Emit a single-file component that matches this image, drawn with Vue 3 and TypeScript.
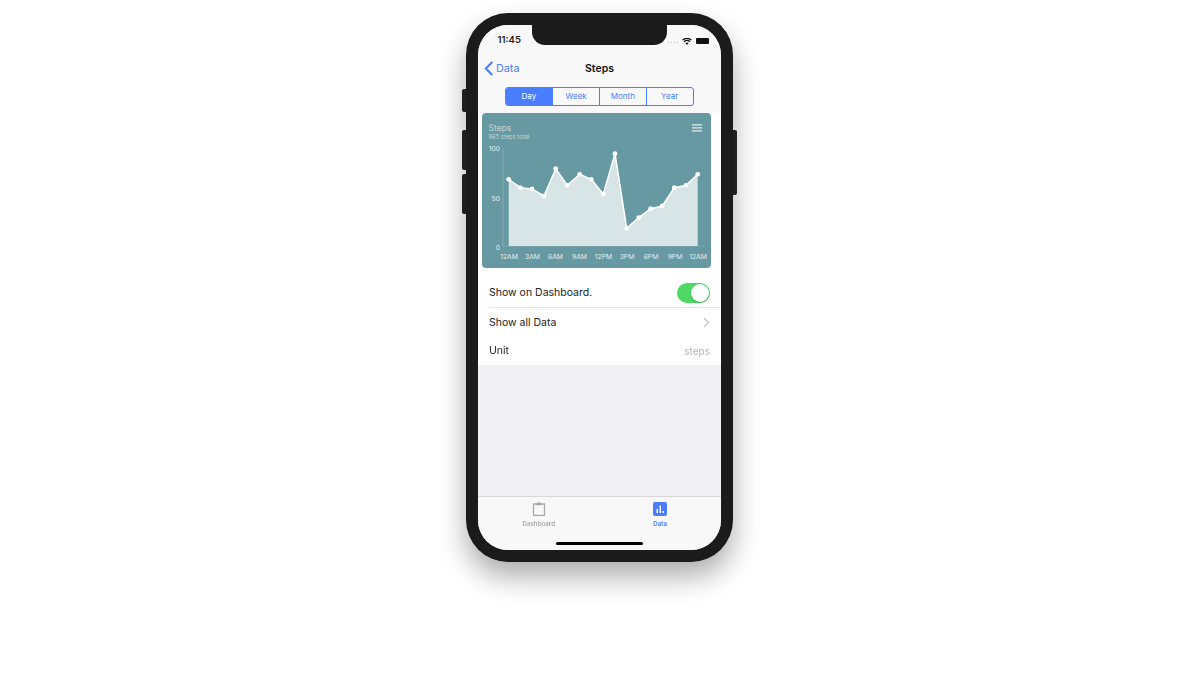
<script setup lang="ts">
const raw: [number, number][] = [[92,208],[127,233],[162,237],[198,258],[233,176],[268,226],[305,193],[340,208],[376,252],[411,131],[446,355],[482,323],[518,296],[553,288],[589,233],[624,226],[659,193]]
const pts = raw.map(([x, y]) => ({ x: +(x / 3 - 4).toFixed(1), y: +(y / 3 - 3).toFixed(1) }))
const base = 133
const line = pts.map(p => `${p.x},${p.y}`).join(' ')
const area = `${pts[0].x},${base} ${line} ${pts[pts.length - 1].x},${base}`
const xLabels = [['12AM',27],['3AM',50.5],['6AM',73.5],['9AM',97.5],['12PM',121.5],['3PM',145],['6PM',169],['9PM',193],['12AM',216]] as const
const yLabels = [['100',35],['50',85],['0',133.5]] as const
const segments = ['Day', 'Week', 'Month', 'Year']
</script>

<template>
  <div class="page">
    <div class="phone">
      <i class="btn b1"></i><i class="btn b2"></i><i class="btn b3"></i><i class="btn b4"></i>
      <div class="screen">
        <div class="notch"></div>
        <div class="status">
          <span class="time">11:45</span>
          <span class="status-icons">
            <span class="dots"><i></i><i></i><i></i><i></i></span>
            <svg width="10" height="7" viewBox="0 0 11 8"><path d="M5.5 8 L3.6 5.8 A3 3 0 0 1 7.4 5.8Z M2.7 4.8 L1.6 3.6 A6 6 0 0 1 9.4 3.6 L8.3 4.8 A4.2 4.2 0 0 0 2.7 4.8Z M.9 2.8 L0 1.8 A8 8 0 0 1 11 1.8 L10.100 2.800 A6.800 6.800 0 0 0 .9 2.800Z" fill="#111"/></svg>
            <span class="battery"></span>
          </span>
        </div>
        <div class="nav">
          <span class="back">
            <svg width="10" height="15" viewBox="0 0 10 15"><path d="M8.300 1 L1.800 7.500 L8.300 14" fill="none" stroke="#4a7dff" stroke-width="2"/></svg>
            Data
          </span>
          <span class="title">Steps</span>
        </div>
        <div class="segment-wrap">
          <div class="segment">
            <span v-for="(s, i) in segments" :key="s" :class="['seg', { on: i === 0 }]">{{ s }}</span>
          </div>
        </div>
        <div class="chart-wrap">
          <div class="card">
            <svg class="chart" width="229" height="155" viewBox="0 0 229 155">
              <text x="6.500" y="18" class="c-title">Steps</text>
              <text x="6.500" y="25.500" class="c-sub">865 steps total</text>
              <g fill="#c3d6d9"><rect x="210" y="11" width="10" height="1.700"/><rect x="210" y="14" width="10" height="1.700"/><rect x="210" y="17" width="10" height="1.700"/></g>
              <path d="M21 35 V133 H222" fill="none" stroke="#86abb1" stroke-width="1"/>
              <polygon :points="area" fill="#d8e5e6"/>
              <polyline :points="line" fill="none" stroke="#fff" stroke-width="1.500"/>
              <circle v-for="(p, i) in pts" :key="i" :cx="p.x" :cy="p.y" r="2.400" fill="#fff"/>
              <text v-for="l in yLabels" :key="l[0]" x="18" :y="l[1] + 3" text-anchor="end" class="c-label">{{ l[0] }}</text>
              <text v-for="(l, i) in xLabels" :key="i" :x="l[1]" y="145.500" text-anchor="middle" class="c-label">{{ l[0] }}</text>
            </svg>
          </div>
        </div>
        <div class="list">
          <div class="row first">
            <span>Show on Dashboard.</span>
            <span class="toggle"><i></i></span>
          </div>
          <div class="row">
            <span>Show all Data</span>
            <svg width="7" height="11" viewBox="0 0 7 11"><path d="M1 1 L5.500 5.500 L1 10" fill="none" stroke="#c4c4c8" stroke-width="1.300"/></svg>
          </div>
          <div class="row">
            <span>Unit</span>
            <span class="muted">steps</span>
          </div>
        </div>
        <div class="fill"></div>
        <div class="tabs">
          <div class="tab">
            <svg width="14" height="14" viewBox="0 0 14 14"><path d="M1.500 2 H12.500 V13.300 H1.500Z" fill="none" stroke="#a9a9a9" stroke-width="1.300"/><path d="M4 2.700 V1.300 H5.800 A1.200 1.200 0 0 1 8.200 1.300 H10 V3.300 H4Z" fill="#a9a9a9"/></svg>
            <span>Dashboard</span>
          </div>
          <div class="tab active">
            <svg width="14" height="14" viewBox="0 0 14 14"><rect width="14" height="14" rx="2" fill="#4a7dff"/><path d="M3.500 7 H5 V11 H3.500Z M6.500 3.500 H8 V11 H6.500Z M9.500 9 H11 V11 H9.500Z" fill="#fff"/></svg>
            <span>Data</span>
          </div>
          <div class="home"></div>
        </div>
      </div>
    </div>
  </div>
</template>

<style>
html, body { margin: 0; background: #fff; }
</style>

<style scoped>
.page {
  width: 1200px;
  height: 700px;
  overflow: hidden;
  display: flex;
  justify-content: center;
  padding-top: 13px;
  box-sizing: border-box;
  background: #fff;
  font-family: Inter, "Liberation Sans", Arial, sans-serif;
}
.phone {
  position: relative;
  width: 267px;
  height: 549px;
  box-sizing: border-box;
  padding: 12px;
  margin-left: -1px;
  background: #1b1b1b;
  border-radius: 42px;
  box-shadow: 0 15px 28px rgba(0, 0, 0, .32);
  filter: blur(.35px);
}
.btn { position: absolute; width: 4px; background: #1f1f1f; }
.b1 { left: -4px; top: 76px; height: 23px; border-radius: 2px 0 0 2px; }
.b2 { left: -4px; top: 117px; height: 40px; border-radius: 2px 0 0 2px; }
.b3 { left: -4px; top: 161px; height: 40px; border-radius: 2px 0 0 2px; }
.b4 { right: -4px; top: 117px; height: 65px; border-radius: 0 2px 2px 0; }
.screen {
  position: relative;
  width: 243px;
  height: 525px;
  overflow: hidden;
  border-radius: 30px;
  background: #efeff4;
  display: flex;
  flex-direction: column;
}
.notch {
  position: absolute;
  left: 53.500px;
  top: 0;
  width: 135px;
  height: 20px;
  background: #1b1b1b;
  border-radius: 0 0 13px 13px;
}
.status {
  height: 22px;
  flex: none;
  display: flex;
  justify-content: space-between;
  align-items: flex-end;
  padding: 0 12px 1px 19.500px;
  background: #f8f8f8;
  box-sizing: border-box;
}
.time { font-size: 9.500px; font-weight: 600; color: #222; line-height: 12px; }
.status-icons { display: flex; align-items: center; gap: 4px; height: 10px; }
.dots { display: flex; gap: 1.500px; margin-right: 0; padding-top: 3px; }
.dots i { width: 1.500px; height: 1.500px; background: #bbb; }
.battery { width: 13px; height: 6px; background: #111; border-radius: 1px; }
.nav {
  position: relative;
  height: 40px;
  box-sizing: border-box;
  padding-top: 2px;
  flex: none;
  background: #f8f8f8;
  display: flex;
  align-items: center;
  justify-content: center;
}
.back {
  position: absolute;
  left: 6px;
  top: 14px;
  display: flex;
  align-items: center;
  gap: 2px;
  font-size: 10.800px;
  color: #4a7dff;
  line-height: 15px;
}
.title { font-size: 10.500px; font-weight: 600; color: #111; }
.segment-wrap {
  flex: none;
  height: 26px;
  display: flex;
  justify-content: center;
  background: #f8f8f8;
}
.segment {
  width: 189px;
  height: 19px;
  box-sizing: border-box;
  margin-left: -1px;
  display: grid;
  grid-template-columns: repeat(4, 1fr);
  border: 1px solid #4a7dff;
  border-radius: 3px;
  overflow: hidden;
}
.seg {
  font-size: 8px;
  line-height: 17px;
  text-align: center;
  color: #4a7dff;
  border-left: 1px solid #4a7dff;
}
.seg:first-child { border-left: 0; }
.seg.on { background: #4a7dff; color: #fff; }
.chart-wrap { flex: none; height: 165px; background: #fff; padding-left: 3.500px; }
.card { width: 229px; height: 155px; background: #6699a2; border-radius: 4px; overflow: hidden; }
.chart { display: block; font-family: Inter, "Liberation Sans", Arial, sans-serif; }
.c-title { font-size: 8.500px; fill: #c3d6d9; }
.c-sub { font-size: 5.800px; fill: #c3d6d9; }
.c-label { font-size: 6.800px; fill: #e6eeef; }
.list { flex: none; background: #fff; font-size: 10.500px; color: #222; }
.row {
  height: 28.500px;
  margin-left: 11px;
  padding-right: 11px;
  display: flex;
  align-items: center;
  justify-content: space-between;
  box-sizing: border-box;
}
.row.first { height: 30px; border-bottom: 1px solid #e6e6e8; }
.toggle {
  position: relative;
  width: 33px;
  height: 20px;
  border-radius: 10px;
  background: #4cd964;
}
.toggle i {
  position: absolute;
  right: 1px;
  top: 1px;
  width: 18px;
  height: 18px;
  border-radius: 50%;
  background: #fff;
  box-shadow: 0 1px 2px rgba(0, 0, 0, .25);
}
.muted { color: #b5b5b8; font-size: 10px; }
.fill { flex: 1; }
.tabs {
  position: relative;
  flex: none;
  height: 54px;
  box-sizing: border-box;
  border-top: 1px solid #d8d8da;
  background: #f8f8f8;
  display: grid;
  grid-template-columns: 1fr 1fr;
  align-content: start;
}
.tab {
  display: flex;
  flex-direction: column;
  align-items: center;
  padding-top: 5px;
  gap: 4px;
  font-size: 6.200px;
  font-weight: 600;
  color: #a9a9a9;
}
.tab svg { display: block; }
.tab.active { color: #4a7dff; }
.home {
  position: absolute;
  left: 78px;
  bottom: 5px;
  width: 87px;
  height: 3px;
  border-radius: 2px;
  background: #000;
}
</style>
